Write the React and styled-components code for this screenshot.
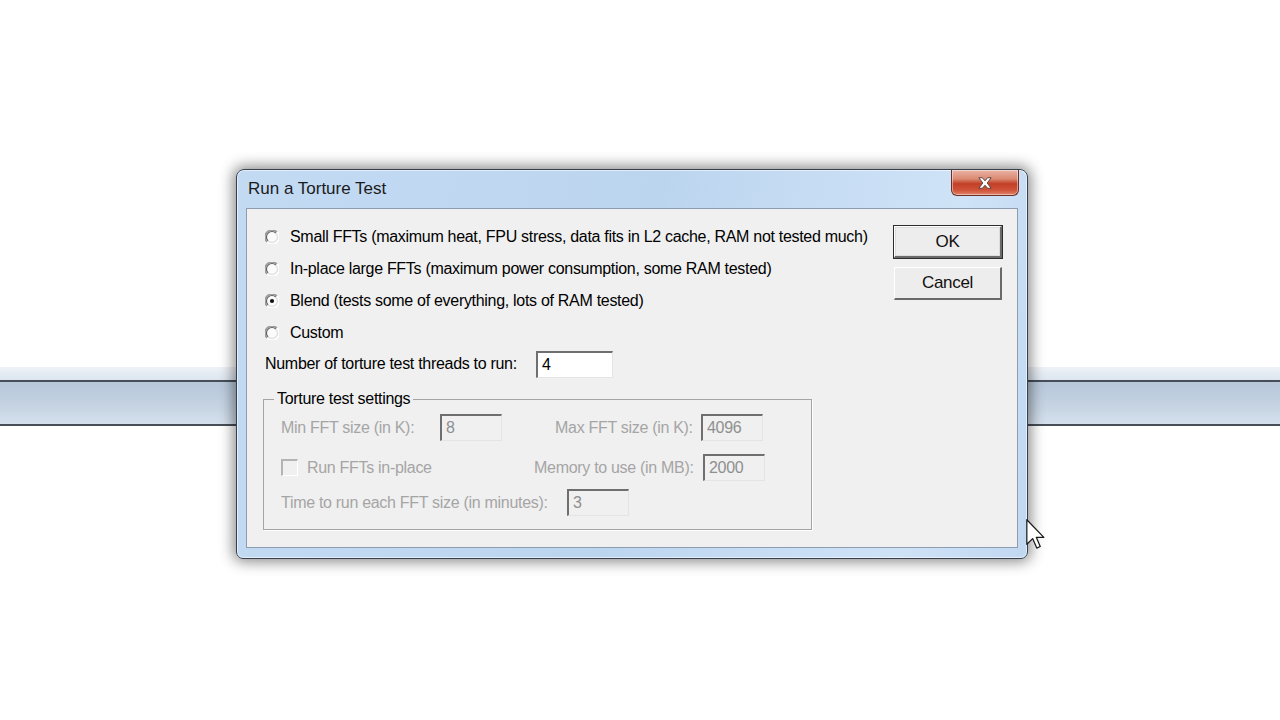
import React from 'react'
import styled, { createGlobalStyle } from 'styled-components'

const GlobalStyle = createGlobalStyle`
  html, body {
    margin: 0;
    padding: 0;
    background: #ffffff;
  }
  * {
    box-sizing: border-box;
  }
`;

const Desktop = styled.div`
  position: relative;
  width: 1280px;
  height: 720px;
  overflow: hidden;
  background: #ffffff;
  font-family: "Liberation Sans", Arial, sans-serif;
`;

const Band = styled.div`
  margin-top: 367px;
  display: flex;
  flex-direction: column;
  .glow {
    height: 13px;
    background: linear-gradient(#eef2f7, #dce5ef);
  }
  .line {
    height: 2px;
    background: #474e57;
  }
  .bar {
    height: 42px;
    background: linear-gradient(#b7c7da, #c6d4e3 60%, #d5e0ec);
  }
`;

const Window = styled.div`
  position: absolute;
  left: 236px;
  top: 169px;
  width: 792px;
  height: 390px;
  display: flex;
  flex-direction: column;
  border: 1px solid #36414d;
  border-radius: 8px 8px 7px 7px;
  background: linear-gradient(100deg, #c3daf3, #bcd5ef 50%, #cfe3f7 85%, #c1d8f1);
  box-shadow: 0 0 14px 3px rgba(0, 0, 0, 0.45), inset 0 0 0 1px rgba(255, 255, 255, 0.55);
`;

const TitleBar = styled.div`
  height: 38px;
  display: flex;
  align-items: flex-start;
  justify-content: space-between;
  padding: 0 8px 0 11px;
`;

const Title = styled.span`
  margin-top: 9px;
  font-size: 17px;
  color: #1b1b1b;
`;

const CloseButton = styled.div`
  width: 68px;
  height: 26px;
  display: flex;
  align-items: center;
  justify-content: center;
  border: 1px solid #6b2f28;
  border-top: none;
  border-radius: 0 0 6px 6px;
  background: linear-gradient(#eab4a6, #dc8a74 35%, #c23f27 55%, #cf5338 80%, #e0836a);
  box-shadow: inset 0 0 0 1px rgba(255, 255, 255, 0.45);
`;

const Client = styled.div`
  flex: 1;
  margin: 0 9px 10px 9px;
  border: 1px solid #8d9cb0;
  background: #f0f0f0;
  display: flex;
  font-size: 16px;
  letter-spacing: -0.3px;
  color: #000;
`;

const Options = styled.div`
  flex: 1;
  display: flex;
  flex-direction: column;
  padding: 12px 0 0 18px;
`;

const OptionRow = styled.label`
  height: 32px;
  display: flex;
  align-items: center;
  gap: 11px;
  white-space: nowrap;
`;

const ThreadsRow = styled.div`
  height: 30px;
  display: flex;
  align-items: center;
  white-space: nowrap;
  span {
    width: 271px;
  }
`;

const TextBox = styled.div`
  width: ${p => p.$w || 62}px;
  height: 27px;
  display: flex;
  align-items: center;
  padding-left: 4px;
  font-size: 16px;
  color: ${p => (p.$disabled ? '#8f8f8f' : '#000')};
  background: ${p => (p.$disabled ? '#f0f0f0' : '#ffffff')};
  border-style: solid;
  border-width: 2px 1px 1px 2px;
  border-color: #6f6f6f #e4e4e4 #e4e4e4 #6f6f6f;
  flex-shrink: 0;
`;

const Group = styled.fieldset`
  margin: 11px 0 0 -2px;
  width: 549px;
  padding: 6px 0 13px 0;
  border: 1px solid #a4a4a4;
  box-shadow: 1px 1px 0 #ffffff;
  display: flex;
  flex-direction: column;
  legend {
    margin-left: 10px;
    padding: 0 3px;
    font-size: 16px;
    line-height: 18px;
    color: #000;
  }
`;

const FieldRow = styled.div`
  height: 27px;
  margin-top: ${p => p.$mt || 0}px;
  padding-left: 17px;
  display: flex;
  align-items: center;
  white-space: nowrap;
`;

const Caption = styled.span`
  width: ${p => p.$w}px;
  margin-left: ${p => p.$ml || 0}px;
  color: #a5a5a5;
  flex-shrink: 0;
`;

const CheckBox = styled.span`
  width: 17px;
  height: 17px;
  margin-right: 9px;
  background: #f0f0f0;
  border-style: solid;
  border-width: 2px 1px 1px 2px;
  border-color: #b4b4b4 #ffffff #ffffff #b4b4b4;
  flex-shrink: 0;
`;

const Buttons = styled.div`
  width: 123px;
  padding-top: 17px;
  display: flex;
  flex-direction: column;
  gap: 9px;
`;

const PushButton = styled.div`
  width: 108px;
  height: ${p => (p.$default ? 32 : 33)}px;
  display: flex;
  align-items: center;
  justify-content: center;
  font-size: 17px;
  color: #111;
  background: #ededed;
  border-style: solid;
  border-width: 1px 2px 2px 1px;
  border-color: #ffffff #6a6a6a #6a6a6a #ffffff;
  outline: ${p => (p.$default ? '1px solid #2c2c2c' : 'none')};
  box-shadow: ${p => (p.$default ? 'inset 0 0 0 1px #dcdcdc' : 'none')};
`;

const Pointer = styled.svg`
  position: absolute;
  left: 1026px;
  top: 519px;
`;

function Radio({ checked }) {
  return (
    <svg width="14" height="14" viewBox="0 0 14 14">
      <path d="M2.05 11.95 A7 7 0 0 1 11.95 2.05" fill="none" stroke="#9a9a9a" strokeWidth="1.6" />
      <path d="M11.95 2.05 A7 7 0 0 1 2.05 11.95" fill="none" stroke="#ffffff" strokeWidth="1.6" />
      <path d="M3.1 10.9 A5.5 5.5 0 0 1 10.9 3.1" fill="none" stroke="#5e5e5e" strokeWidth="1.2" />
      <path d="M10.9 3.1 A5.5 5.5 0 0 1 3.1 10.9" fill="none" stroke="#dedede" strokeWidth="1.2" />
      <circle cx="7" cy="7" r="4.6" fill="#fbfbfb" />
      {checked && <circle cx="7" cy="7" r="2.1" fill="#111" />}
    </svg>
  );
}

function CloseGlyph() {
  return (
    <svg width="18" height="14" viewBox="0 0 20 16">
      <path d="M3 2 L7 2 L10 5.5 L13 2 L17 2 L12.5 8 L17 14 L13 14 L10 10.5 L7 14 L3 14 L7.5 8 Z"
        fill="#ffffff" stroke="#4a3a3a" strokeWidth="1" strokeLinejoin="round" />
    </svg>
  );
}

const options = [
  { label: 'Small FFTs (maximum heat, FPU stress, data fits in L2 cache, RAM not tested much)' },
  { label: 'In-place large FFTs (maximum power consumption, some RAM tested)' },
  { label: 'Blend (tests some of everything, lots of RAM tested)', checked: true },
  { label: 'Custom' },
];

export default function App() {
  return (
    <>
      <GlobalStyle />
      <Desktop>
        <Band>
          <div className="glow" />
          <div className="line" />
          <div className="bar" />
          <div className="line" />
        </Band>

        <Window>
          <TitleBar>
            <Title>Run a Torture Test</Title>
            <CloseButton>
              <CloseGlyph />
            </CloseButton>
          </TitleBar>

          <Client>
            <Options>
              {options.map(o => (
                <OptionRow key={o.label}>
                  <Radio checked={o.checked} />
                  <span>{o.label}</span>
                </OptionRow>
              ))}

              <ThreadsRow>
                <span>Number of torture test threads to run:</span>
                <TextBox $w={77}>4</TextBox>
              </ThreadsRow>

              <Group>
                <legend>Torture test settings</legend>
                <FieldRow>
                  <Caption $w={159}>Min FFT size (in K):</Caption>
                  <TextBox $disabled>8</TextBox>
                  <Caption $w={146} $ml={53}>Max FFT size (in K):</Caption>
                  <TextBox $disabled>4096</TextBox>
                </FieldRow>
                <FieldRow $mt={13}>
                  <CheckBox />
                  <Caption $w={227}>Run FFTs in-place</Caption>
                  <Caption $w={169}>Memory to use (in MB):</Caption>
                  <TextBox $disabled>2000</TextBox>
                </FieldRow>
                <FieldRow $mt={8}>
                  <Caption $w={286}>Time to run each FFT size (in minutes):</Caption>
                  <TextBox $disabled>3</TextBox>
                </FieldRow>
              </Group>
            </Options>

            <Buttons>
              <PushButton $default>OK</PushButton>
              <PushButton>Cancel</PushButton>
            </Buttons>
          </Client>
        </Window>

        <Pointer width="19" height="30" viewBox="0 0 12 19">
          <path d="M0.5 0.5 L0.5 16 L4.2 12.4 L6.8 18.4 L9 17.4 L6.5 11.6 L11.3 11.6 Z"
            fill="#ffffff" stroke="#1a1a1a" strokeWidth="0.8" strokeLinejoin="round" />
        </Pointer>
      </Desktop>
    </>
  );
}
